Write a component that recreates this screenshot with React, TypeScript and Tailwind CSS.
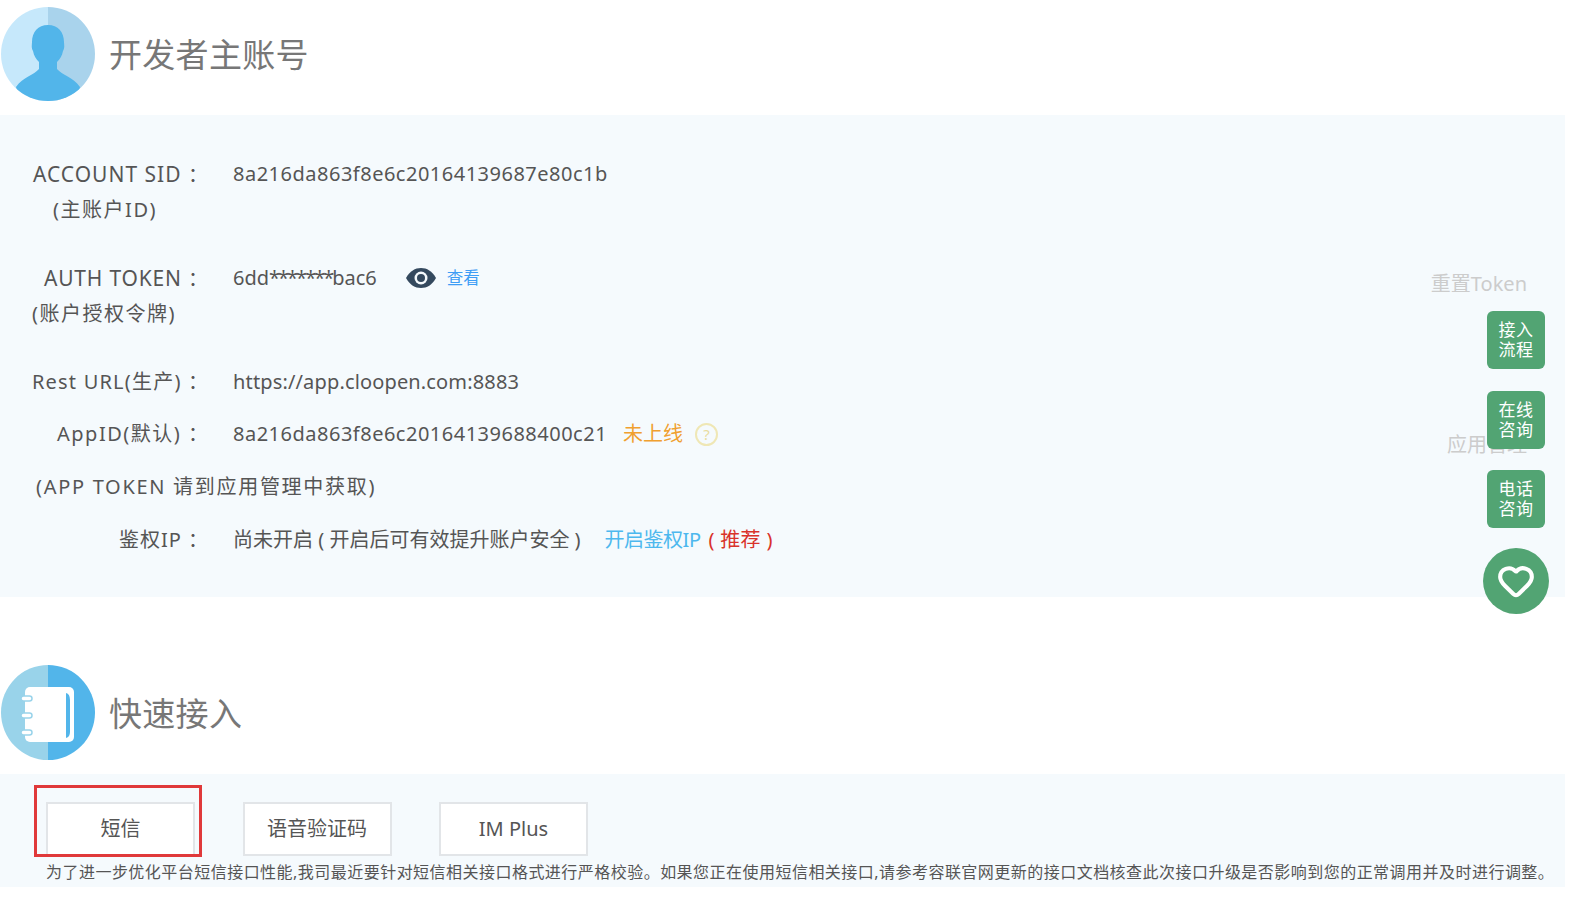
import { Heart } from "lucide-react";

const font = { fontFamily: '"Noto Sans", "Noto Sans CJK SC", sans-serif' };

function UserBadge() {
  return (
    <svg viewBox="0 0 94 94" className="h-[94px] w-[94px] shrink-0">
      <defs>
        <clipPath id="badge-user">
          <circle cx="47" cy="47" r="47" />
        </clipPath>
      </defs>
      <g clipPath="url(#badge-user)">
        <rect width="47" height="94" fill="#c6e8fb" />
        <rect x="47" width="47" height="94" fill="#a9d3ec" />
        <path
          d="M47 18C37 18 31 25 31 35C31 38 30 40 32 44C33 49 35 52 38 55V62C33 68 22 70 15 80L20 100H74L79 80C72 70 61 68 56 62V55C59 52 61 49 62 44C64 40 63 38 63 35C63 25 57 18 47 18Z"
          fill="#52b5ea"
        />
      </g>
    </svg>
  );
}

function BookBadge() {
  return (
    <svg viewBox="0 0 94 95" className="h-[95px] w-[94px] shrink-0">
      <defs>
        <clipPath id="badge-book">
          <ellipse cx="47" cy="47.5" rx="47" ry="47.5" />
        </clipPath>
      </defs>
      <g clipPath="url(#badge-book)">
        <rect width="47" height="95" fill="#99d3ea" />
        <rect x="47" width="47" height="95" fill="#52b5ea" />
        <rect x="24" y="22" width="49" height="55" rx="5" fill="#fff" />
        <path d="M65 28q4 1 4 7v32q0 5-4 6z" fill="#52b5ea" />
        <rect x="20" y="31" width="11" height="5" rx="2.5" fill="#fff" stroke="#99d3ea" strokeWidth="1.5" />
        <rect x="20" y="48" width="11" height="5" rx="2.5" fill="#fff" stroke="#99d3ea" strokeWidth="1.5" />
        <rect x="20" y="65" width="11" height="5" rx="2.5" fill="#fff" stroke="#99d3ea" strokeWidth="1.5" />
      </g>
    </svg>
  );
}

function EyeIcon() {
  return (
    <svg viewBox="0 0 30 20" className="h-5 w-[30px]">
      <path d="M0 10C4 3 9 0 15 0s11 3 15 10c-4 7-9 10-15 10S4 17 0 10z" fill="#34495e" />
      <circle cx="15" cy="10" r="6.5" fill="#f5fafd" />
      <circle cx="15" cy="10" r="4" fill="#34495e" />
    </svg>
  );
}

function SideButton({ top, bottom }: { top: string; bottom: string }) {
  return (
    <div className="flex h-[58px] w-[58px] flex-col items-center justify-center rounded-md bg-[#52a473] text-[17px] leading-[20px] tracking-[0.5px] text-white">
      <span>{top}</span>
      <span>{bottom}</span>
    </div>
  );
}

function Row({
  label,
  labelClass,
  sub,
  subClass,
  children,
  mb,
}: {
  label: string;
  labelClass: string;
  sub?: string;
  subClass?: string;
  children?: React.ReactNode;
  mb: string;
}) {
  return (
    <div className={`flex leading-[36px] ${mb}`}>
      <div className="w-[233px] shrink-0 pr-[25px] text-right">
        <div className="h-9 whitespace-nowrap">
          <span className={labelClass}>{label} </span>：
        </div>
        {sub && <div className={subClass}>{sub}</div>}
      </div>
      <div className="flex items-center self-start">{children}</div>
    </div>
  );
}

export default function App() {
  return (
    <div className="relative h-[900px] w-[1572px] overflow-hidden bg-white text-[20px] text-[#555]" style={font}>
      <div className="w-[1565px]">
        <div className="flex h-[115px] items-start gap-[14px] pl-px pt-[7px]">
          <UserBadge />
          <h2 className="mt-[23px] text-[33px] font-normal tracking-[0.3px] text-[#777]">开发者主账号</h2>
        </div>

        <section className="relative h-[482px] bg-[#f5fafd] pt-[41px]">
          <Row
            label="ACCOUNT SID"
            labelClass="text-[21px] tracking-[1px]"
            sub="(主账户ID)"
            subClass="pr-[51px] tracking-[1.5px]"
            mb="mb-8"
          >
            <span className="tracking-[0.5px]">8a216da863f8e6c20164139687e80c1b</span>
          </Row>
          <Row
            label="AUTH TOKEN"
            labelClass="text-[21px] tracking-[0.8px]"
            sub="(账户授权令牌)"
            subClass="pr-[32px] tracking-[1.5px]"
            mb="mb-8"
          >
            <span>
              6dd<span className="tracking-[-2px]">*******</span>bac6
            </span>
            <span className="ml-[29px]"><EyeIcon /></span>
            <span className="ml-[11px] text-[16.5px] text-[#3d9df5]">查看</span>
          </Row>
          <Row label="Rest URL(生产)" labelClass="tracking-[1.2px]" mb="mb-4">
            <span className="tracking-[0.15px]">https://app.cloopen.com:8883</span>
          </Row>
          <Row label="AppID(默认)" labelClass="tracking-[1.5px]" mb="mb-[17px]">
            <span className="tracking-[0.5px]">8a216da863f8e6c20164139688400c21</span>
            <span className="ml-4 text-[#f0a02f]">未上线</span>
            <span className="ml-3 flex h-[23px] w-[23px] items-center justify-center rounded-full border-2 border-[#efe7b5] text-[15px] leading-none text-[#e9dd9f]">?</span>
          </Row>
          <div className="mb-[17px] pl-[36px] leading-[36px] tracking-[1.7px]">(APP TOKEN 请到应用管理中获取)</div>
          <Row label="鉴权IP" labelClass="tracking-[1px]" mb="mb-0">
            <span>尚未开启 ( 开启后可有效提升账户安全 )</span>
            <span className="ml-6 tracking-[-0.5px] text-[#4db8ee]">开启鉴权IP</span>
            <span className="ml-2 tracking-[0.3px] text-[#d9322a]">( 推荐 )</span>
          </Row>
          <span className="absolute right-[38px] top-[154px] text-[#ccc]">重置Token</span>
          <span className="absolute right-[38px] top-[315px] text-[#ccc]">应用管理</span>
        </section>

        <div className="mt-[68px] flex h-[109px] items-start gap-[14px] pl-px">
          <BookBadge />
          <h2 className="mt-[24px] text-[33px] font-normal tracking-[0.3px] text-[#777]">快速接入</h2>
        </div>

        <section className="h-[113px] bg-[#f5fafd] pt-[28px]">
          <div className="flex gap-[47.5px] pl-[46px]">
            <div className="flex h-[54px] w-[149px] items-center justify-center border-2 border-[#e2e5e8] bg-white">短信</div>
            <div className="flex h-[54px] w-[149px] items-center justify-center border-2 border-[#e2e5e8] bg-white">语音验证码</div>
            <div className="flex h-[54px] w-[149px] items-center justify-center border-2 border-[#e2e5e8] bg-white">IM Plus</div>
          </div>
          <p className="mt-px whitespace-nowrap pl-[46px] text-[16px] leading-[30px] tracking-[0.47px]">
            为了进一步优化平台短信接口性能,我司最近要针对短信相关接口格式进行严格校验。如果您正在使用短信相关接口,请参考容联官网更新的接口文档核查此次接口升级是否影响到您的正常调用并及时进行调整。
          </p>
        </section>
      </div>

      {/* annotation box around the first tab */}
      <div className="absolute left-[34px] top-[785px] h-[72px] w-[168px] border-[3px] border-[#e0393a]" />

      <div className="absolute left-[1483px] top-[311px] flex w-[66px] flex-col items-center">
        <div className="flex flex-col gap-[21.5px]">
          <SideButton top="接入" bottom="流程" />
          <SideButton top="在线" bottom="咨询" />
          <SideButton top="电话" bottom="咨询" />
        </div>
        <div className="mt-5 flex h-[66px] w-[66px] items-center justify-center rounded-full bg-[#52a473]">
          <Heart size={38} strokeWidth={2.6} className="text-white" />
        </div>
      </div>
    </div>
  );
}
